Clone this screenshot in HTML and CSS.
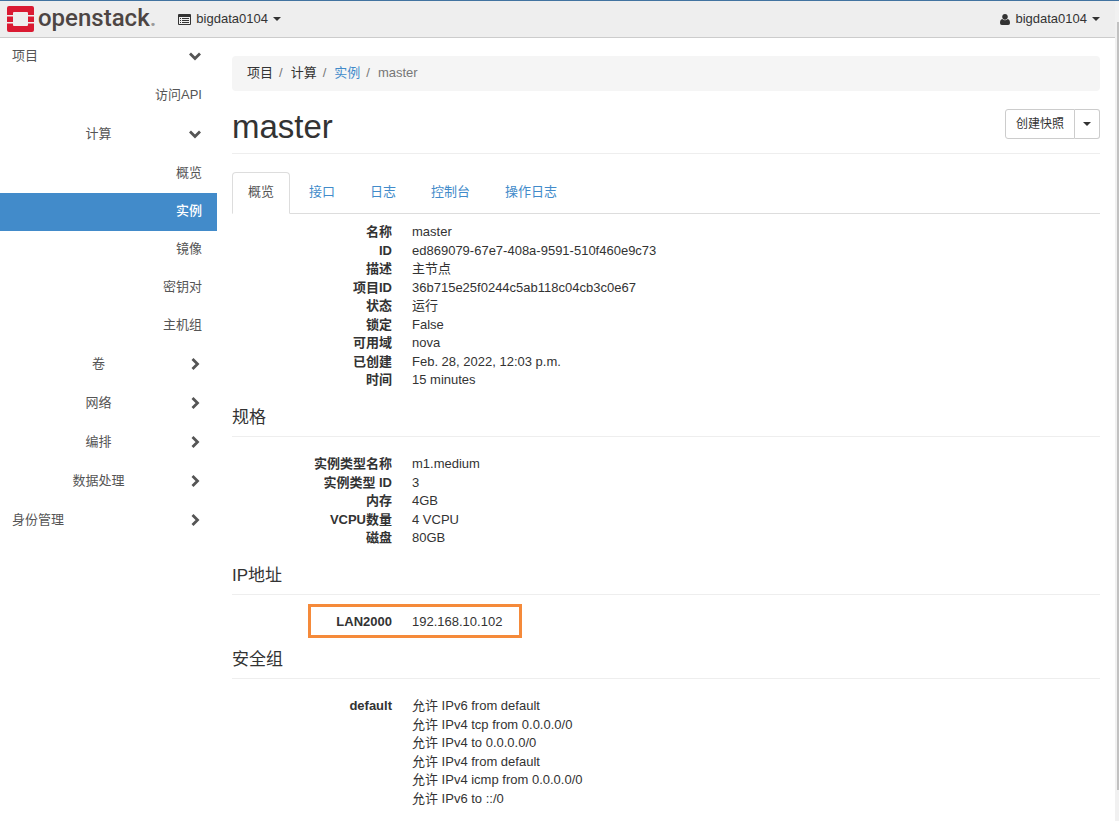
FILE: index.html
```
<!DOCTYPE html>
<html lang="zh-CN">
<head>
<meta charset="utf-8">
<title>master - OpenStack Dashboard</title>
<link rel="stylesheet" href="styles.css">
</head>
<body>
<svg width="0" height="0" class="defs" aria-hidden="true">
  <symbol id="down" viewBox="0 0 12 12"><path d="M1 3.5 6 8.5 11 3.5" fill="none" stroke="currentColor" stroke-width="2.8"/></symbol>
  <symbol id="right" viewBox="0 0 12 12"><path d="M3.5 1 8.5 6 3.5 11" fill="none" stroke="currentColor" stroke-width="2.8"/></symbol>
</svg>
<div class="app">
  <div class="page">
    <header class="topbar">
      <a class="brand" href="#" aria-label="openstack">
        <svg class="logo" viewBox="0 0 27 26" aria-hidden="true">
          <path fill="#da1a32" d="M2 0H25Q27 0 27 2V9H21V7Q21 6 20 6H7Q6 6 6 7V9H0V2Q0 0 2 0ZM0 10.5H6V16H0ZM21 10.5H27V16H21ZM0 17.500H6V19Q6 20 7 20H20Q21 20 21 19V17.500H27V24Q27 26 25 26H2Q0 26 0 24Z"/>
        </svg>
        <span class="wordmark">openstack<span class="dot">.</span></span>
      </a>
      <button class="menu" type="button">
        <svg class="list-icon" viewBox="0 0 13 11" aria-hidden="true"><path fill="currentColor" fill-rule="evenodd" d="M1 0H12Q13 0 13 1V10Q13 11 12 11H1Q0 11 0 10V1Q0 0 1 0ZM1 3V10H12V3ZM2 4H3V5H2ZM4 4H11V5H4ZM2 6H3V7H2ZM4 6H11V7H4ZM2 8H3V9H2ZM4 8H11V9H4Z"/></svg>
        bigdata0104 <span class="caret"></span>
      </button>
      <button class="menu user" type="button">
        <svg class="user-icon" viewBox="0 0 10 11" aria-hidden="true"><path fill="currentColor" d="M5 0C6.700 0 7.800 1.200 7.800 2.800S6.700 5.800 5 5.800 2.200 4.400 2.200 2.800 3.300 0 5 0ZM2.300 5C3.800 6.700 6.200 6.700 7.700 5 9.300 5.300 10 7 10 9Q10 11 8.200 11H1.800Q0 11 0 9C0 7 .7 5.300 2.300 5Z"/></svg>
        bigdata0104 <span class="caret"></span>
      </button>
    </header>
    <div class="body">
      <nav class="sidebar">
        <a class="item top" href="#">项目<svg class="chev"><use href="#down"/></svg></a>
        <a class="item leaf" href="#">访问API</a>
        <a class="item mid" href="#"><span>计算</span><svg class="chev"><use href="#down"/></svg></a>
        <div class="panels">
          <a class="item leaf" href="#">概览</a>
          <a class="item leaf active" href="#">实例</a>
          <a class="item leaf" href="#">镜像</a>
          <a class="item leaf" href="#">密钥对</a>
          <a class="item leaf" href="#">主机组</a>
        </div>
        <a class="item mid" href="#"><span>卷</span><svg class="chev"><use href="#right"/></svg></a>
        <a class="item mid" href="#"><span>网络</span><svg class="chev"><use href="#right"/></svg></a>
        <a class="item mid" href="#"><span>编排</span><svg class="chev"><use href="#right"/></svg></a>
        <a class="item mid" href="#"><span>数据处理</span><svg class="chev"><use href="#right"/></svg></a>
        <a class="item top" href="#">身份管理<svg class="chev"><use href="#right"/></svg></a>
      </nav>
      <main class="content">
        <ol class="breadcrumb">
          <li>项目</li><li>计算</li><li><a href="#">实例</a></li><li class="current">master</li>
        </ol>
        <div class="page-header">
          <h1>master</h1>
          <div class="actions">
            <button type="button">创建快照</button><button type="button" class="toggle" aria-label="更多操作"><span class="caret"></span></button>
          </div>
        </div>
        <nav class="tabs">
          <a class="tab selected" href="#">概览</a><a class="tab" href="#">接口</a><a class="tab" href="#">日志</a><a class="tab" href="#">控制台</a><a class="tab" href="#">操作日志</a>
        </nav>
        <dl class="details">
          <dt>名称</dt><dd>master</dd>
          <dt>ID</dt><dd>ed869079-67e7-408a-9591-510f460e9c73</dd>
          <dt>描述</dt><dd>主节点</dd>
          <dt>项目ID</dt><dd>36b715e25f0244c5ab118c04cb3c0e67</dd>
          <dt>状态</dt><dd>运行</dd>
          <dt>锁定</dt><dd>False</dd>
          <dt>可用域</dt><dd>nova</dd>
          <dt>已创建</dt><dd>Feb. 28, 2022, 12:03 p.m.</dd>
          <dt>时间</dt><dd>15 minutes</dd>
        </dl>
        <h4>规格</h4>
        <dl class="details">
          <dt>实例类型名称</dt><dd>m1.medium</dd>
          <dt>实例类型 ID</dt><dd>3</dd>
          <dt>内存</dt><dd>4GB</dd>
          <dt>VCPU数量</dt><dd>4 VCPU</dd>
          <dt>磁盘</dt><dd>80GB</dd>
        </dl>
        <h4>IP地址</h4>
        <dl class="details marked">
          <dt>LAN2000</dt><dd>192.168.10.102</dd>
        </dl>
        <h4>安全组</h4>
        <dl class="details">
          <dt>default</dt><dd>允许 IPv6 from default</dd>
          <dd>允许 IPv4 tcp from 0.0.0.0/0</dd>
          <dd>允许 IPv4 to 0.0.0.0/0</dd>
          <dd>允许 IPv4 from default</dd>
          <dd>允许 IPv4 icmp from 0.0.0.0/0</dd>
          <dd>允许 IPv6 to ::/0</dd>
        </dl>
      </main>
    </div>
  </div>
  <div class="scroll-rail"><div class="scroll-thumb"></div></div>
</div>
</body>
</html>
```
FILE: styles.css
```
*, ::before, ::after { box-sizing: border-box; }
body {
  margin: 0;
  background: #fff;
  color: #333;
  font: 13px/18px "Liberation Sans", "Noto Sans CJK SC", sans-serif;
}
a { color: #428bca; text-decoration: none; }
button { font: inherit; color: inherit; cursor: pointer; }
.defs { position: absolute; }
.app { display: flex; min-height: 100vh; border-top: 1px solid #4273a0; }
.page { flex: 1; min-width: 0; }

.topbar {
  display: flex;
  align-items: center;
  height: 37px;
  padding: 0 15px 0 7px;
  background: #eee;
  border-bottom: 1px solid #ccc;
}
.brand { display: flex; align-items: center; gap: 4px; color: #4d4543; }
.logo { width: 27px; height: 26px; }
.wordmark { padding-bottom: 2px; font: 500 24px/28px Roboto, sans-serif; }
.dot { color: #999; }
.menu {
  display: flex;
  align-items: center;
  gap: 5px;
  margin-left: 22px;
  padding: 0;
  border: 0;
  background: none;
}
.user { margin-left: auto; }
.list-icon { width: 13px; height: 11px; }
.user-icon { width: 10px; height: 11px; }
.caret {
  border-top: 4px solid currentColor;
  border-left: 4px solid transparent;
  border-right: 4px solid transparent;
}

.body { display: flex; }
.sidebar { width: 217px; flex: none; }
.item {
  display: flex;
  align-items: center;
  height: 38px;
  margin-bottom: 1px;
  padding: 0 15px 2px 12px;
  color: #555;
}
.chev { width: 12px; height: 12px; margin-left: auto; }
.top .chev, .mid .chev { margin-right: 1px; }
.leaf { justify-content: flex-end; }
.mid { display: grid; padding-left: 0; padding-right: 15px; }
.mid span, .mid .chev { grid-area: 1 / 1; }
.mid span { justify-self: center; padding-right: 5px; }
.mid .chev { justify-self: end; }
.active { background: #428bca; color: #fff; font-weight: 500; }
.panels { padding-bottom: 1px; }
.panels .item { margin-bottom: 0; }

.content { flex: 1; min-width: 0; padding: 18px 15px 14px; }
.breadcrumb {
  display: flex;
  margin: 0 0 18px;
  padding: 8px 15px 9px;
  list-style: none;
  background: #f5f5f5;
  border-radius: 4px;
}
.breadcrumb li + li::before { content: "/"; padding: 0 8px 0 6px; color: #777; }
.current { color: #777; }
.page-header {
  display: flex;
  justify-content: space-between;
  height: 45px;
  margin-bottom: 18px;
  border-bottom: 1px solid #eee;
}
h1 { margin: 0; font-size: 33px; line-height: 36px; font-weight: 400; }
.actions { display: flex; height: 30px; }
.actions button {
  padding: 0 10px;
  border: 1px solid #ccc;
  border-radius: 3px 0 0 3px;
  background: #fff;
  font-size: 12px;
}
.actions .toggle {
  display: flex;
  align-items: center;
  padding: 0 8px;
  border-left: 0;
  border-radius: 0 3px 3px 0;
}
.tabs { display: flex; gap: 3px; border-bottom: 1px solid #ddd; }
.tab { padding: 10px 15px 11px; border: 1px solid transparent; line-height: 18px; }
.selected {
  margin-bottom: -1px;
  border-color: #ddd;
  border-bottom-color: #fff;
  border-radius: 4px 4px 0 0;
  background: #fff;
  color: #555;
}

.details {
  display: grid;
  grid-template-columns: 160px 1fr;
  grid-auto-rows: 19px 18px;
  column-gap: 20px;
  margin: 18px 0 0;
}
.tabs + .details { margin-top: 9px; }
.details dt { text-align: right; font-weight: 700; }
.details dd { grid-column: 2; margin: 0; }
h4 {
  margin: 18px 0 0;
  padding-bottom: 9px;
  border-bottom: 1px solid #eee;
  font-size: 17px;
  line-height: 19px;
  font-weight: 400;
}
.marked { position: relative; }
.marked::after {
  content: "";
  position: absolute;
  left: 76px;
  top: -9px;
  width: 214px;
  height: 34px;
  border: 3px solid #f58a3a;
}

.scroll-rail { display: flex; flex-direction: column; align-items: flex-end; width: 4px; padding: 21px 0 32px; background: #f1f1f1; }
.scroll-thumb { flex: 1; width: 2px; background: #c1c1c1; }
```
